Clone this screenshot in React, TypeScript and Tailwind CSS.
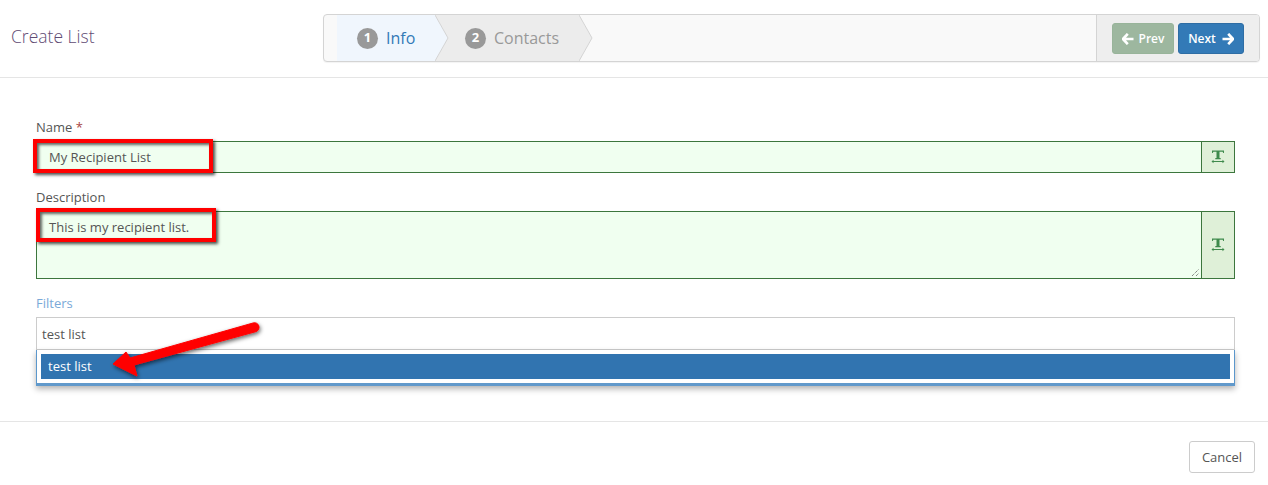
function TextWidthIcon() {
  return (
    <svg width="14" height="14" viewBox="0 0 14 14" className="text-[#3f8a4c]">
      <path d="M1 3V0.500h12V3h-.8l-.5-1.200H8.500V8h1.200v1.200H4.300V8h1.200V1.800H2.300L1.800 3z" fill="currentColor" />
      <path d="M1 11h12v1H1z" fill="currentColor" />
      <path d="M2.500 9.800v3.400L0.500 11.500zM11.500 9.800v3.400l2-1.700z" fill="currentColor" />
    </svg>
  )
}

// chunky arrow, same weight as the old font-awesome glyph
function ArrowIcon({ dir }: { dir: 'left' | 'right' }) {
  return (
    <svg width="12" height="12" viewBox="0 0 12 12" className={dir === 'right' ? 'rotate-180' : ''}>
      <path d="M5.800 0.800L1 6l4.800 5.200M1.500 6H11.500" fill="none" stroke="currentColor" strokeWidth="2.600" strokeLinejoin="round" />
    </svg>
  )
}

function StepArrow({ fill }: { fill: string }) {
  return (
    <svg width="14" height="46" viewBox="0 0 14 46" className="absolute top-0 left-full">
      <path d="M0 0L13 23L0 46Z" fill={fill} />
      <path d="M0 0L13 23L0 46" fill="none" stroke="#d4d4d4" />
    </svg>
  )
}

function Step({ num, label, active }: { num: number; label: string; active?: boolean }) {
  return (
    <div className={`relative flex h-[46px] items-center ${active ? 'z-10 w-[98px] bg-[#f0f6fd] pl-[20px]' : 'w-[144px] bg-[#ececec] pl-[30px]'}`}>
      <span className="flex h-[21px] w-[21px] items-center justify-center rounded-full bg-[#999999] text-[13px] font-bold text-white">{num}</span>
      <span className={`ml-[8px] text-[16px] ${active ? 'text-[#337ab7]' : 'text-[#999999]'}`}>{label}</span>
      <StepArrow fill={active ? '#f0f6fd' : '#ececec'} />
    </div>
  )
}

function Highlight({ className }: { className: string }) {
  return <div className={`absolute border-[4px] border-[#ff0000] shadow-[2px_2px_3px_rgba(0,0,0,0.7),inset_2px_2px_3px_rgba(0,0,0,0.6)] ${className}`} />
}

export default function App() {
  return (
    <div className="relative h-[485px] w-[1268px] overflow-hidden bg-white font-['Open_Sans',sans-serif] text-[13px] text-[#555555]">
      {/* Header */}
      <div className="flex h-[78px] items-start border-b border-[#e5e5e5] pt-[14px]">
        <h1 className="ml-[11px] w-[312px] pt-[10px] text-[17.500px] leading-[24px] font-light text-[#5f4b73]">Create List</h1>
        <div className="flex h-[48px] w-[937px] overflow-hidden rounded-[4px] border border-[#d4d4d4] bg-[#f9f9f9] shadow-[0_1px_1px_rgba(0,0,0,0.05)]">
          <div className="w-[13px]" />
          <Step num={1} label="Info" active />
          <Step num={2} label="Contacts" />
          <div className="flex-1" />
          <div className="flex w-[163px] items-center gap-[4px] border-l border-[#d4d4d4] bg-[#eeeeee] pt-[1px] pl-[15px]">
            <button className="flex h-[31px] w-[62px] items-center justify-center gap-[5px] rounded-[3px] border border-[#98b49a] bg-[#9db79f] text-[12px] font-semibold text-white">
              <ArrowIcon dir="left" />
              Prev
            </button>
            <button className="flex h-[31px] w-[66px] items-center justify-center gap-[6px] rounded-[3px] border border-[#2e6da4] bg-[#337ab7] text-[12px] font-semibold text-white">
              Next
              <ArrowIcon dir="right" />
            </button>
          </div>
        </div>
      </div>

      {/* Form */}
      <div className="flex h-[344px] flex-col border-b border-[#e5e5e5] pt-[41px] pr-[33px] pl-[36px]">
        <label className="h-[22px] leading-[16px]">
          Name <span className="text-[#a94442]">*</span>
        </label>
        <div className="flex h-[32px] border border-[#3c763d]">
          <div className="flex flex-1 items-center bg-[#f0fff0] pt-[2px] pl-[12px] text-[#555555]">My Recipient List</div>
          <div className="flex w-[33px] items-center justify-center border-l border-[#3c763d] bg-[#dff0d8]">
            <TextWidthIcon />
          </div>
        </div>
        <label className="mt-[16px] h-[22px] leading-[16px]">Description</label>
        <div className="flex h-[68px] border border-[#3c763d]">
          <div className="relative flex-1 bg-[#f0fff0] pt-[5px] pl-[12px] leading-[20px]">
            This is my recipient list.
            <svg width="10" height="10" viewBox="0 0 10 10" className="absolute right-[1px] bottom-[1px]">
              <path d="M2 9L9 2M6 9L9 6" stroke="#555555" strokeWidth="1" strokeDasharray="1 1" />
            </svg>
          </div>
          <div className="flex w-[33px] items-center justify-center border-l border-[#3c763d] bg-[#dff0d8]">
            <TextWidthIcon />
          </div>
        </div>
        <label className="mt-[16px] h-[22px] leading-[16px] text-[#7aa9d8]">Filters</label>
        <div className="relative h-[33px] border border-[#cccccc] pt-[1px] pl-[5px] leading-[31px]">
          test list
          <div className="absolute top-[32px] right-[-1px] left-[-1px] h-[36px] border-x border-b-[3px] border-x-[#5b97cc] border-b-[#6199cb] bg-white px-[4px] pt-[4px] shadow-[0_3px_6px_rgba(0,0,0,0.3)]">
            <div className="h-[25px] bg-[#3174b0] pl-[7px] leading-[25px] text-white">test list</div>
          </div>
        </div>
      </div>

      {/* Footer */}
      <div className="flex justify-end pt-[19px] pr-[13px]">
        <button className="h-[32px] w-[66px] rounded-[3px] border border-[#cccccc] bg-white pt-[1px] text-[13px] text-[#555555]">Cancel</button>
      </div>

      {/* Annotations */}
      <Highlight className="top-[139px] left-[33px] h-[34px] w-[180px]" />
      <Highlight className="top-[208px] left-[36px] h-[34px] w-[180px]" />
      <svg width="170" height="70" viewBox="0 0 170 70" className="absolute top-[318px] left-[105px]">
        <defs>
          <filter id="arrow-shadow" x="-10%" y="-30%" width="120%" height="160%">
            <feDropShadow dx="1" dy="2" stdDeviation="2" floodColor="#000" floodOpacity="0.6" />
          </filter>
        </defs>
        <path d="M148 5a4.500 4.500 0 0 1 3 8.600L29 47l3 11L8 46l13-12 4 6Z" fill="#ff0000" stroke="#ff0000" strokeWidth="1" strokeLinejoin="round" filter="url(#arrow-shadow)" />
      </svg>
    </div>
  )
}
